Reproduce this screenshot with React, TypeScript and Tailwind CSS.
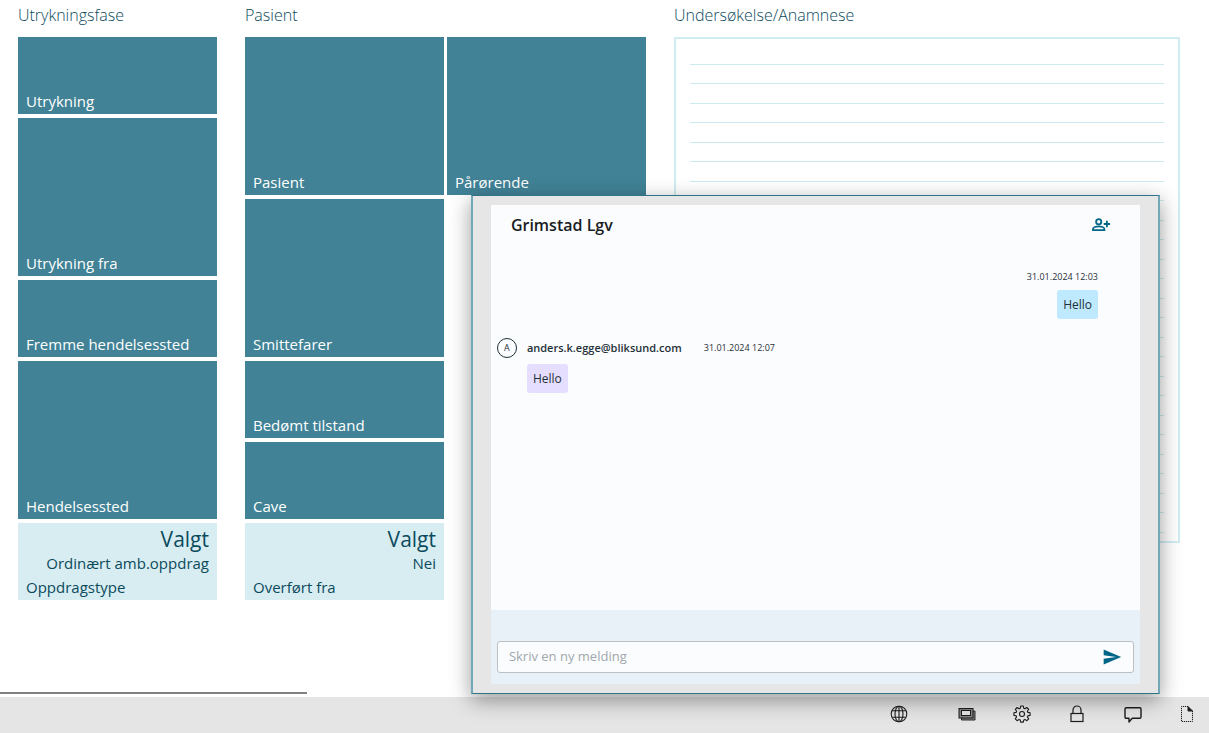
import { useState } from 'react';
import { MdSend } from 'react-icons/md';

interface TileData {
  label: string;
  double?: boolean;
  value?: string;
}

const phaseTiles: TileData[] = [
  { label: 'Utrykning' },
  { label: 'Utrykning fra', double: true },
  { label: 'Fremme hendelsessted' },
  { label: 'Hendelsessted', double: true },
  { label: 'Oppdragstype', value: 'Ordinært amb.oppdrag' },
];

const patientTiles: TileData[] = [
  { label: 'Pasient', double: true },
  { label: 'Smittefarer', double: true },
  { label: 'Bedømt tilstand' },
  { label: 'Cave' },
  { label: 'Overført fra', value: 'Nei' },
];

const relativeTiles: TileData[] = [{ label: 'Pårørende', double: true }];

const noteLines = Array.from({ length: 25 }, (_, i) => i);

function Tile({ label, double, value }: TileData) {
  if (value) {
    return (
      <button type="button" className="flex h-[77px] flex-col bg-[#d8edf2] px-2 pt-1 text-[15px] leading-6 text-[#0b4a5c]">
        <span className="self-end text-[21px] leading-6">Valgt</span>
        <span className="self-end">{value}</span>
        <span className="self-start">{label}</span>
      </button>
    );
  }
  return (
    <button
      type="button"
      className={`flex items-end bg-[#418296] px-2 pb-px text-[15px] leading-6 text-white ${double ? 'h-[158px]' : 'h-[77px]'}`}
    >
      {label}
    </button>
  );
}

function TileColumn({ tiles }: { tiles: TileData[] }) {
  return (
    <div className="flex w-[199px] flex-col gap-1">
      {tiles.map((tile) => (
        <Tile key={tile.label} {...tile} />
      ))}
    </div>
  );
}

function SectionTitle({ children }: { children: string }) {
  return <h2 className="pb-[6px] text-base leading-[31px] font-light text-[#0b4a5c]">{children}</h2>;
}

function PersonAddIcon() {
  return (
    <svg viewBox="0 0 20 16" className="h-4 w-5" fill="none" stroke="currentColor" strokeWidth="1.8" aria-hidden="true">
      <circle cx="7.7" cy="4.7" r="2.6" />
      <path d="M2 13.1V12c0-1.7 3.2-2.7 5.7-2.7s5.7 1 5.7 2.7v1.1z" />
      <path d="M15.9 3.8v6.4M12.7 7h6.4" />
    </svg>
  );
}

function ChatWindow() {
  const [draft, setDraft] = useState('');

  return (
    <section
      aria-label="Grimstad Lgv"
      className="absolute right-[49px] bottom-[39px] flex h-[499px] w-[57%] flex-col border border-x-2 border-[#2f7388] border-x-[#72a7b8] bg-[#e6e6e6] px-[18px] py-[9px] shadow-[0_6px_20px_rgba(0,0,0,0.4)]"
    >
      <header className="flex items-center justify-between bg-[#fbfcfe] py-2 pr-[29px] pl-5">
        <h1 className="text-base leading-6 font-semibold text-[#1a1c1e]">Grimstad Lgv</h1>
        <button type="button" aria-label="Legg til person" className="text-[#006687]">
          <PersonAddIcon />
        </button>
      </header>

      <div className="flex flex-1 flex-col bg-[#fbfcfe] pt-6 text-[11px] text-[#1f3038]">
        <div className="flex flex-col items-end gap-[5px] pr-[42px]">
          <time className="text-[9px] leading-4">31.01.2024 12:03</time>
          <p className="rounded-[3px] bg-[#bfe9ff] p-[6px] text-xs leading-[17px]">Hello</p>
        </div>
        <div className="flex gap-[10px] pt-[19px] pl-[6px]">
          <span className="flex size-5 items-center justify-center rounded-full border border-[#1f3038] text-[9px]">A</span>
          <div className="flex flex-col items-start gap-[6px]">
            <div className="flex items-center gap-[22px] leading-5">
              <span className="font-semibold">anders.k.egge@bliksund.com</span>
              <time className="text-[9px]">31.01.2024 12:07</time>
            </div>
            <p className="rounded-[3px] bg-[#e6deff] p-[6px] text-xs leading-[17px]">Hello</p>
          </div>
        </div>
      </div>

      <form
        className="bg-[#e9f1f8] px-[6px] pt-[31px] pb-[11px]"
        onSubmit={(event) => {
          event.preventDefault();
          setDraft('');
        }}
      >
        <div className="flex h-8 items-center rounded-[3px] border border-[#bdbfc1] bg-[#fbfcfe] px-[11px]">
          <input
            type="text"
            aria-label="Skriv en ny melding"
            placeholder="Skriv en ny melding"
            value={draft}
            onChange={(event) => setDraft(event.target.value)}
            className="min-w-0 flex-1 bg-transparent text-[13px] text-[#1f3038] outline-none placeholder:text-[#a0a8ad]"
          />
          <button type="submit" aria-label="Send" className="text-[#006687]">
            <MdSend className="size-5" />
          </button>
        </div>
      </form>
    </section>
  );
}

function Toolbar() {
  const iconClass = 'size-[18px]';
  return (
    <footer className="flex h-9 items-center justify-end bg-[#e5e5e5] pr-[13px] pb-[3px] text-[#1c1c1c]">
      <button type="button" aria-label="Nettverk" className="mr-[50px]">
        <svg viewBox="0 0 18 18" className={iconClass} fill="none" stroke="currentColor" strokeWidth="1.1">
          <circle cx="9" cy="9" r="7.8" />
          <ellipse cx="9" cy="9" rx="4" ry="7.8" />
          <path d="M9 1v16M2.2 5.8h13.6M2.2 12.2h13.6" />
        </svg>
      </button>
      <button type="button" aria-label="Vinduer" className="mr-[37px]">
        <svg viewBox="0 0 18 18" className={iconClass} fill="none" stroke="currentColor">
          <path d="M3.5 12.5V15H17V6h-2.5v6.5z" fill="#858585" strokeWidth=".9" />
          <rect x="1" y="3.5" width="14" height="9.5" fill="#858585" />
          <rect x="3.5" y="5.5" width="9" height="5" fill="#e5e5e5" />
        </svg>
      </button>
      <button type="button" aria-label="Innstillinger" className="mr-[37px]">
        <svg viewBox="0 0 18 18" className={iconClass} fill="none" stroke="currentColor" strokeWidth="1.1" strokeLinejoin="round">
          <circle cx="9" cy="9" r="2.5" />
          <path d="M7.7 1h2.6l.5 2.3 1.1.5 2-1.3 1.8 1.8-1.3 2 .5 1.1 2.2.4v2.6l-2.2.4-.5 1.1 1.3 2-1.8 1.8-2-1.3-1.1.5-.5 2.2H7.7l-.5-2.2-1.1-.5-2 1.3-1.8-1.8 1.3-2-.5-1.1L.9 10.4V7.8l2.2-.4.5-1.1-1.3-2 1.8-1.8 2 1.3 1.1-.5z" />
        </svg>
      </button>
      <button type="button" aria-label="Lås" className="mr-[38px]">
        <svg viewBox="0 0 18 18" className={iconClass} fill="none" stroke="currentColor" strokeWidth="1.2">
          <rect x="3" y="8.5" width="12" height="8" />
          <path d="M5 8.5V5a4 4 0 0 1 8 0v3.5" />
        </svg>
      </button>
      <button type="button" aria-label="Meldinger" className="mr-9">
        <svg viewBox="0 0 18 18" className={iconClass} fill="none" stroke="currentColor" strokeWidth="1.4" strokeLinejoin="round">
          <path d="M2.2 2.7h13.6q1.2 0 1.2 1.2v8.2q0 1.2-1.2 1.2H8.3L5 17v-3.7H2.2Q1 13.3 1 12.1V3.9q0-1.2 1.2-1.2z" />
        </svg>
      </button>
      <button type="button" aria-label="Nytt dokument">
        <svg viewBox="0 0 18 18" className={iconClass} fill="none" stroke="currentColor">
          <path d="M10 1.5H3.5v15h11V6" strokeDasharray="1.2 .8" />
          <path d="M10 1.5V6h4.5z" fill="currentColor" />
        </svg>
      </button>
    </footer>
  );
}

export default function App() {
  return (
    <div className="relative flex min-h-screen flex-col overflow-hidden bg-white font-['Open_Sans','Noto_Sans',sans-serif]">
      <main className="flex gap-7 pr-[29px] pl-[18px]">
        <section>
          <SectionTitle>Utrykningsfase</SectionTitle>
          <TileColumn tiles={phaseTiles} />
        </section>
        <section>
          <SectionTitle>Pasient</SectionTitle>
          <div className="flex gap-[3px]">
            <TileColumn tiles={patientTiles} />
            <TileColumn tiles={relativeTiles} />
          </div>
        </section>
        <section className="flex-1">
          <SectionTitle>Undersøkelse/Anamnese</SectionTitle>
          <div className="h-[506px] border-2 border-[#d0edf2] px-[14px] pt-[6px]">
            {noteLines.map((line) => (
              <div key={line} className="h-5 border-b border-[#cdecf1] even:h-[19px]" />
            ))}
          </div>
        </section>
      </main>

      <div className="mt-auto mb-[3px] h-[2px] w-[307px] bg-[#808080]" />
      <Toolbar />
      <ChatWindow />
    </div>
  );
}
